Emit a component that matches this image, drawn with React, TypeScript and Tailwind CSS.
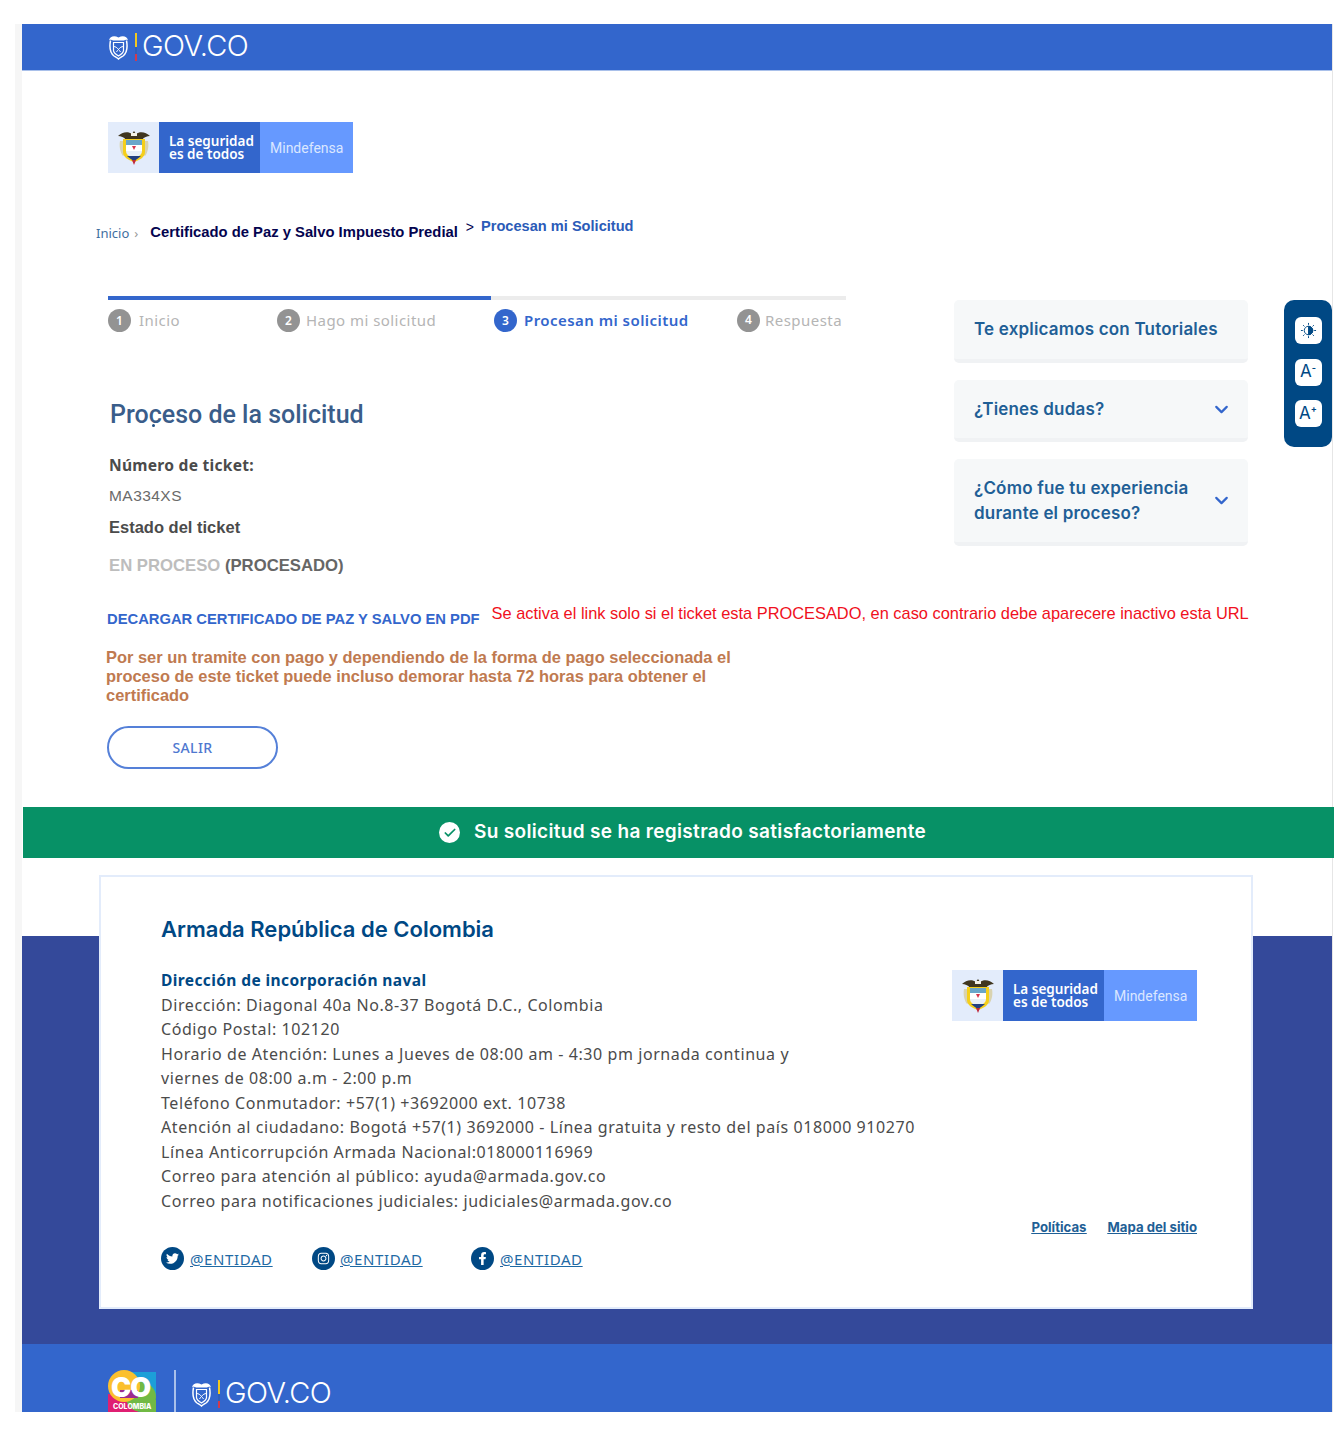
import React from 'react';
import { ChevronDown, Check } from 'lucide-react';
import { FaTwitter, FaFacebookF, FaInstagram } from 'react-icons/fa';

const sans = "font-['Liberation_Sans',Arial,sans-serif]";
const mont = "font-['Inter',sans-serif]";
const work = "font-['Noto_Sans',sans-serif]";

// white outline version of the national shield, used next to GOV.CO
const ShieldWhite = () => (
  <svg viewBox="0 0 21 26" className="w-[21px] h-[26px]" fill="none" stroke="#fff">
    <path d="M1 6C2 2.500 6 1 10.500 3.500 15 1 19 2.500 20 6c-1.500-.5-3-.5-4 .5h-11c-1-1-2.500-1-4-.5Z" fill="#fff" stroke="none" />
    <path d="M2.500 6.500C1.500 12 2 19 6 22c1.500 1 3 1.500 4.500 3 1.500-1.500 3-2 4.500-3 4-3 4.500-10 3.500-15.500" strokeWidth="1.500" />
    <path d="M5.500 8.500h10v8c0 2.500-2.500 4-5 5.500-2.500-1.500-5-3-5-5.500Z" strokeWidth="1.200" />
    <path d="M5.500 12.500c2 0 3.500 1 5 3 1.500-2 3-3 5-3M8.500 18c.5-1 1-1.500 2-2.500 1 1 1.500 1.500 2 2.500" strokeWidth="1" />
  </svg>
);

const GovLogo = () => (
  <div className="flex items-center">
    <ShieldWhite />
    <div className="ml-[6px] mr-[5px] w-[2px] h-[28px] flex flex-col">
      <div className="flex-[2] bg-[#f2c81e]" />
      <div className="flex-1 bg-[#2f5fb8]" />
      <div className="flex-1 bg-[#d03a4e]" />
    </div>
    <span className={`${mont} text-white font-light leading-none tracking-[-0.5px] text-[29px] mb-[3px]`}>GOV.CO</span>
  </div>
);

const ShieldColor = () => (
  <svg viewBox="0 0 34 37" className="w-[34px] h-[37px]">
    {/* flags behind the shield */}
    <path d="M3 12c-1 5 0 11 3 15l3-3V12ZM31 12c1 5 0 11-3 15l-3-3V12Z" fill="#d9d3b0" />
    {/* condor */}
    <path d="M1 7c4-4 10-5 14-2l2-3 2 3c4-3 10-2 14 2-3 0-6 1-8 4H9C7 8 4 7 1 7Z" fill="#40361f" />
    <path d="M14 4h6v3h-6Z" fill="#f3f1e6" />
    {/* shield */}
    <path d="M6 10h22v13c0 5-5 8-11 10C11 31 6 28 6 23Z" fill="#f5cf1a" />
    <path d="M9 11h16v5H9Z" fill="#6aa6c9" />
    <path d="M9 16h16v6H9Z" fill="#fff" />
    <path d="M15 17h4l-2 4Z" fill="#d8344a" />
    <path d="M9 22h16c0 3-2 4-3 5H12c-1-1-3-2-3-5Z" fill="#e9f0f7" />
    <path d="M10 27h14c-2 2-4 3-7 5-3-2-5-3-7-5Z" fill="#23407f" />
    <path d="M15 31h4l-2 5Z" fill="#c0283c" />
  </svg>
);

const MindefensaLogo = () => (
  <div className="flex w-[245px] h-[51px] shrink-0">
    <div className="w-[51px] bg-[#e3ecfb] flex items-center justify-center">
      <ShieldColor />
    </div>
    <div className={`w-[101px] bg-[#3366cc] flex flex-col justify-center pl-[10px] text-white font-semibold text-[13.5px] leading-[13px] whitespace-nowrap ${work}`}>
      <span>La seguridad</span>
      <span>es de todos</span>
    </div>
    <div className="w-[93px] bg-[#6699ff] flex items-center pl-[10px] pt-[2px] text-[14px] text-[#dbe7ff] font-['Roboto',sans-serif]">Mindefensa</div>
  </div>
);

const ColombiaLogo = () => (
  <div className="relative w-[48px] h-[42px] overflow-hidden">
    <svg viewBox="0 0 48 42" className="w-[48px] h-[42px]">
      <rect x="17" y="2" width="31" height="24" fill="#1c9fd8" />
      <rect x="0" y="24" width="30" height="18" fill="#df1f72" />
      <circle cx="33" cy="27" r="15" fill="#71b944" />
      <rect x="33" y="30" width="15" height="12" fill="#71b944" />
      <circle cx="16" cy="16" r="16" fill="#fbc02d" />
      <path d="M12 20h18v8H12Z" fill="#9b2a8f" />
    </svg>
    <span className={`absolute left-[3px] top-[5px] text-[27px] leading-[26px] font-black tracking-[-1px] text-white ${mont}`}>CO</span>
    <span className={`absolute left-[5px] top-[33px] text-[7px] leading-[8px] font-extrabold text-white ${mont}`}>COLOMBIA</span>
  </div>
);

const ContrastIcon = () => (
  <svg viewBox="0 0 18 18" className="w-[17px] h-[17px]" stroke="#004884" strokeWidth="1">
    <circle cx="9" cy="9" r="4.500" fill="none" />
    <path d="M9 4.500a4.500 4.500 0 0 1 0 9Z" fill="#004884" />
    <path d="M9 1v2M9 15v2M1 9h2M15 9h2M3.300 3.300l1.400 1.400M13.300 13.300l1.400 1.400M3.300 14.700l1.400-1.400M13.300 4.700l1.400-1.400" />
  </svg>
);

const Step: React.FC<{ n: number; label: string; active?: boolean; className: string }> = ({ n, label, active, className }) => (
  <div className={`flex items-center ${className}`}>
    <span className={`w-[23px] h-[23px] rounded-full flex items-center justify-center text-white text-[12px] font-semibold ${work} ${active ? 'bg-[#3366cc]' : 'bg-[#939393]'}`}>{n}</span>
    <span className={`${work} text-[15px] tracking-[0.45px] whitespace-nowrap ${active ? 'text-[#3366cc] font-semibold' : 'text-[#b5b5b5]'}`}>{label}</span>
  </div>
);

const SideCard: React.FC<{ className: string; chevron?: boolean; children: React.ReactNode }> = ({ className, chevron, children }) => (
  <div className={`w-[294px] bg-[#f6f8f9] rounded-[5px] border-b-[4px] border-[#f0f2f4] pl-[20px] pr-[16px] flex items-center justify-between ${className}`}>
    <span className={`${mont} text-[17px] tracking-[0.18px] font-semibold leading-[25px] text-[#1f5f96]`}>{children}</span>
    {chevron && <ChevronDown className="w-[21px] h-[21px] text-[#3366cc] shrink-0" strokeWidth={2.5} />}
  </div>
);

const Social: React.FC<{ icon: React.ReactNode; className: string }> = ({ icon, className }) => (
  <div className={`flex items-center ${className}`}>
    <span className="w-[23px] h-[23px] rounded-full bg-[#004884] flex items-center justify-center text-white text-[13px]">{icon}</span>
    <a className={`${work} text-[15px] text-[#1f6aa5] underline tracking-[0.6px]`}>@ENTIDAD</a>
  </div>
);

const footerLines = [
  'Dirección: Diagonal 40a No.8-37 Bogotá D.C., Colombia',
  'Código Postal: 102120',
  'Horario de Atención: Lunes a Jueves de 08:00 am - 4:30 pm jornada continua y',
  'viernes de 08:00 a.m - 2:00 p.m',
  'Teléfono Conmutador: +57(1) +3692000 ext. 10738',
  'Atención al ciudadano: Bogotá +57(1) 3692000 - Línea gratuita y resto del país 018000 910270',
  'Línea Anticorrupción Armada Nacional:018000116969',
  'Correo para atención al público: ayuda@armada.gov.co',
  'Correo para notificaciones judiciales: judiciales@armada.gov.co',
];

export default function App() {
  return (
    <div className="w-[1337px] h-[1431px] bg-white pt-[24px] pl-[15px] overflow-hidden">
      <div className="w-[1320px] h-[1388px] border-l-[7px] border-[#f6f6f6] overflow-hidden">
        <div className="relative w-[1311px] h-[1388px] border-r border-[#e6e6e6]">
          {/* Top bar */}
          <header className="h-[47px] bg-[#3366cc] border-b border-[#a9c0ea] pl-[86px] flex items-center">
            <GovLogo />
          </header>

          {/* Accessibility toolbar */}
          <div className="absolute left-[1262px] top-[276px] w-[48px] h-[147px] bg-[#004884] rounded-[10px] flex flex-col items-center pt-[17px] gap-[14.5px]">
            <span className="w-[27px] h-[27px] bg-white rounded-[6px] flex items-center justify-center"><ContrastIcon /></span>
            <span className={`w-[27px] h-[27px] bg-white rounded-[6px] flex items-center justify-center text-[#004884] text-[17px] ${mont}`}>A<sup className="text-[9px] font-bold">-</sup></span>
            <span className={`w-[27px] h-[27px] bg-white rounded-[6px] flex items-center justify-center text-[#004884] text-[17px] ${mont}`}>A<sup className="text-[9px] font-bold">+</sup></span>
          </div>

          <div className="pl-[86px] pt-[51px]">
            <MindefensaLogo />
          </div>

          {/* Breadcrumb */}
          <div className="pl-[74px] mt-[41px] h-[32px] flex items-end whitespace-nowrap">
            <span className={`${work} text-[13px] text-[#3f6f9f] mb-[3px]`}>Inicio</span>
            <span className={`${work} text-[13px] text-[#999] ml-[5px] mb-[3px]`}>›</span>
            <span className={`${sans} font-bold text-[14.8px] text-[#04044f] ml-[12px] mb-[3px]`}>Certificado de Paz y Salvo Impuesto Predial</span>
            <span className={`${sans} text-[14px] text-[#04044f] ml-[8px] mb-[8px]`}>&gt;</span>
            <span className={`${sans} font-bold text-[14.6px] text-[#2b5bb8] ml-[7px] mb-[8px]`}>Procesan mi Solicitud</span>
          </div>

          <div className="flex mt-[50px]">
            {/* Main column */}
            <main className="w-[932px] pl-[86px] shrink-0">
              <div className="w-[738px] h-[4px] bg-[#ececec] flex">
                <div className="w-[383px] bg-[#3366cc]" />
              </div>
              <div className="flex h-[23px] mt-[9px] relative">
                <Step n={1} label="Inicio" className="w-[169px] gap-[8px]" />
                <Step n={2} label="Hago mi solicitud" className="w-[217px] gap-[6px]" />
                <Step n={3} label="Procesan mi solicitud" active className="w-[243px] gap-[7px]" />
                <Step n={4} label="Respuesta" className="-mt-[1px] gap-[5px]" />
              </div>
            </main>

            {/* Side column */}
            <aside className="pt-[4px] flex flex-col gap-[17px]">
              <SideCard className="h-[63px]">Te explicamos con Tutoriales</SideCard>
              <SideCard className="h-[62px]" chevron>¿Tienes dudas?</SideCard>
              <SideCard className="h-[87px]" chevron>¿Cómo fue tu experiencia<br />durante el proceso?</SideCard>
            </aside>
          </div>

          {/* Ticket details, sits under the step row next to the side column */}
          <div className="-mt-[146px] pl-[86px] relative">
            <h1 className="pl-[2px] font-['Roboto',sans-serif] font-medium text-[25px] leading-[30px] text-[#3a5d8a]">
              Pro<span className="relative">c<span className="absolute left-[3px] top-[24px] w-[3px] h-[3px] rounded-full bg-[#1f4f86]" /></span>eso de la solicitud
            </h1>
            <p className={`${work} mt-[24px] pl-[1px] font-bold text-[15.6px] leading-[22px] tracking-[0.25px] text-[#4b4b4b]`}>Número de ticket:</p>
            <p className={`${sans} mt-[9px] pl-[1px] text-[15.5px] leading-[22px] tracking-[0.45px] text-[#6a6a6a]`}>MA334XS</p>
            <p className={`${sans} mt-[9px] pl-[1px] font-bold text-[16.5px] leading-[22px] text-[#4b4b4b]`}>Estado del ticket</p>
            <p className={`${sans} mt-[17px] pl-[1px] font-bold text-[16.7px] leading-[22px]`}>
              <span className="text-[#bdbdbd]">EN PROCESO</span> <span className="text-[#666]">(PROCESADO)</span>
            </p>
            <div className="flex items-start mt-[26px] -ml-[1px] whitespace-nowrap">
              <a className={`${sans} font-bold text-[14.75px] leading-[20px] mt-[6px] text-[#3366cc]`}>DECARGAR CERTIFICADO DE PAZ Y SALVO EN PDF</a>
              <span className={`${sans} text-[16.4px] leading-[20px] ml-[12px] text-[#f01020]`}>Se activa el link solo si el ticket esta PROCESADO, en caso contrario debe aparecere inactivo esta URL</span>
            </div>
            <p className={`${sans} w-[660px] -ml-[2px] mt-[19px] font-bold text-[16.45px] leading-[19px] text-[#c07a50]`}>
              Por ser un tramite con pago y dependiendo de la forma de pago seleccionada el proceso de este ticket puede incluso demorar hasta 72 horas para obtener el certificado
            </p>
            <button className={`${work} w-[171px] h-[43px] -ml-[1px] mt-[21px] rounded-full border-2 border-[#5580d8] text-[14px] font-medium tracking-[0.4px] text-[#4f78d0] flex items-center justify-center`}>SALIR</button>
          </div>

          {/* Success banner */}
          <div className="mt-[38px] ml-[1px] w-[1311px] h-[51px] bg-[#079166] flex items-center pl-[416px] text-white">
            <span className="w-[21px] h-[21px] rounded-full bg-white flex items-center justify-center">
              <Check className="w-[14px] h-[14px] text-[#079166]" strokeWidth={3} />
            </span>
            <span className={`${mont} ml-[14px] text-[19px] tracking-[0.33px] font-semibold whitespace-nowrap`}>Su solicitud se ha registrado satisfactoriamente</span>
          </div>

          {/* Footer */}
          <footer className="bg-[linear-gradient(to_bottom,#fff_78px,#34499a_78px)] pt-[17px] pb-[35px]">
            <div className="ml-[77px] w-[1154px] h-[434px] bg-white border-2 border-[#e3ecfb] pl-[60px] pr-[54px] pt-[37px]">
              <h2 className={`${mont} text-[22px] leading-[30px] font-semibold text-[#004884]`}>Armada República de Colombia</h2>
              <div className="flex justify-between mt-[24px]">
                <div>
                  <p className={`${work} font-bold text-[15.5px] leading-[24.5px] tracking-[0.4px] text-[#004884]`}>Dirección de incorporación naval</p>
                  {footerLines.map((line) => (
                    <p key={line} className={`${work} text-[16px] leading-[24.5px] tracking-[0.58px] text-[#4b4b4b] whitespace-nowrap`}>{line}</p>
                  ))}
                </div>
                <div className="flex flex-col items-end pt-[2px]">
                  <MindefensaLogo />
                  <div className={`${mont} mt-[197px] flex gap-[21px] text-[13.2px] font-bold text-[#1f5f96] underline`}>
                    <a>Políticas</a>
                    <a>Mapa del sitio</a>
                  </div>
                </div>
              </div>
              <div className="flex mt-[9px] h-[24px] items-center">
                <Social icon={<FaTwitter />} className="w-[151px] gap-[6px]" />
                <Social icon={<FaInstagram />} className="w-[159px] gap-[5px]" />
                <Social icon={<FaFacebookF />} className="gap-[6px]" />
              </div>
            </div>
          </footer>

          {/* Bottom bar */}
          <div className="h-[68px] bg-[#3366cc] pl-[86px] pt-[26px] flex items-start overflow-hidden">
            <ColombiaLogo />
            <div className="w-[2px] h-[42px] bg-[#a9c0ea] ml-[18px] mr-[15px]" />
            <div className="mt-[8px]"><GovLogo /></div>
          </div>
        </div>
      </div>
    </div>
  );
}
